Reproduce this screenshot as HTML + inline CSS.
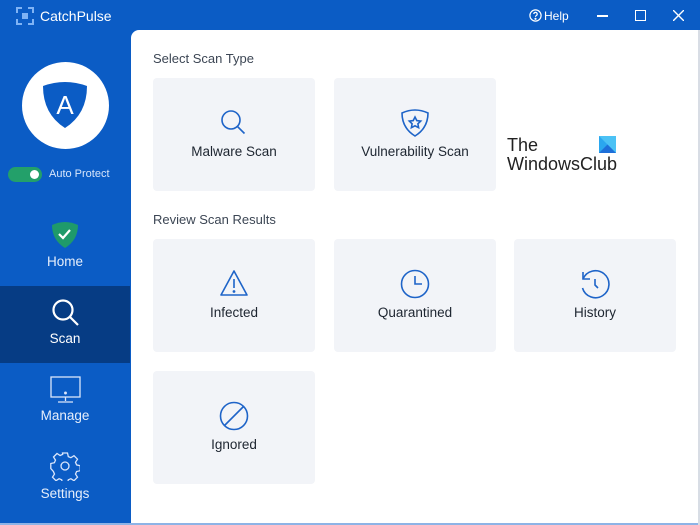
<!DOCTYPE html>
<html><head><style>
*{margin:0;padding:0;box-sizing:border-box}
body{width:700px;height:525px;overflow:hidden;background:#0b5cc5;font-family:"Liberation Sans",sans-serif;position:relative}
.abs{position:absolute}
.panel{left:131px;top:30px;width:567px;height:493px;background:#fff;border-top-left-radius:8px}
.card{position:absolute;width:162px;height:113px;background:#f2f4f8;border-radius:4px;text-align:center;font-size:13.5px;color:#1d2530}
.card svg{position:absolute;left:66px;top:30px}
.card span{position:absolute;left:0;right:0;top:66px}
.h{font-size:13px;color:#3c4654;position:absolute}
.nav{position:absolute;left:0;width:130px;text-align:center;color:#e6eefb;font-size:13.5px}
</style></head><body>
<div class="abs" style="left:0;top:523px;width:700px;height:2px;background:#8db3e6"></div>
<div class="abs" style="left:698px;top:30px;width:2px;height:495px;background:#d8dde5"></div>
<svg class="abs" style="left:16px;top:7px" width="18" height="18" viewBox="0 0 18 18" fill="none" stroke="#7fb3f5" stroke-width="2"><path d="M1 6V1h5M12 1h5v5M17 12v5h-5M6 17H1v-5"/><rect x="6" y="6" width="6" height="6" fill="#7fb3f5" stroke="none"/></svg>
<div class="abs" style="left:40px;top:8px;color:#fff;font-size:14px">CatchPulse</div>
<svg class="abs" style="left:529px;top:9px" width="13" height="13" viewBox="0 0 13 13" fill="none" stroke="#fff" stroke-width="1.2"><circle cx="6.5" cy="6.5" r="5.6"/><path d="M4.8 5a1.7 1.7 0 1 1 2.4 1.6c-.6.3-.7.7-.7 1.3"/><circle cx="6.5" cy="9.8" r=".5" fill="#fff"/></svg>
<div class="abs" style="left:544px;top:9px;color:#fff;font-size:12px">Help</div>
<div class="abs" style="left:597px;top:15px;width:11px;height:1.5px;background:#fff"></div>
<div class="abs" style="left:635px;top:10px;width:11px;height:11px;border:1.5px solid #fff"></div>
<svg class="abs" style="left:673px;top:10px" width="11" height="11" stroke="#fff" stroke-width="1.4"><path d="M0 0L11 11M11 0L0 11"/></svg>
<div class="abs" style="left:22px;top:62px;width:87px;height:87px;border-radius:50%;background:#fff"></div>
<svg class="abs" style="left:41px;top:82px" width="48" height="48" viewBox="0 0 48 48"><path d="M2 4Q24 -4 46 4Q46 32 24 46Q2 32 2 4Z" fill="#0b5cc5"/><text x="24" y="32" text-anchor="middle" fill="#fff" font-size="26" font-family="Liberation Sans">A</text></svg>
<div class="abs" style="left:8px;top:167px;width:34px;height:15px;border-radius:8px;background:#23a06a"></div>
<div class="abs" style="left:30px;top:170px;width:9px;height:9px;border-radius:50%;background:#fff"></div>
<div class="abs" style="left:49px;top:168px;color:#d8e6fb;font-size:11px">Auto Protect</div>
<svg class="abs" style="left:51px;top:221px" width="28" height="28" viewBox="0 0 28 28"><path d="M1 4Q14 -2 27 4Q27 19 14 27Q1 19 1 4Z" fill="#1f9a6a"/><path d="M8 13l4 4 7-8" stroke="#fff" stroke-width="2.2" fill="none"/></svg>
<div class="nav" style="top:254px">Home</div>
<div class="abs" style="left:0;top:286px;width:130px;height:77px;background:#063c84"></div>
<svg class="abs" style="left:51px;top:298px" width="30" height="30" fill="none" stroke="#fff" stroke-width="2.2"><circle cx="12" cy="12" r="9.5"/><path d="M19 19l8 8"/></svg>
<div class="nav" style="top:331px;color:#fff">Scan</div>
<svg class="abs" style="left:50px;top:376px" width="31" height="27" fill="none" stroke="#dbe6fb" stroke-width="1.3"><rect x="1" y="1" width="29" height="20"/><path d="M15.5 21v4M8 26h15"/><circle cx="15.5" cy="17" r=".8" fill="#dbe6fb"/></svg>
<div class="nav" style="top:408px">Manage</div>
<svg class="abs" style="left:50px;top:451px" width="30" height="30" viewBox="0 0 30 30" fill="none" stroke="#dbe6fb" stroke-width="1.3"><path d="M12.5 2h5l.8 3.6 2.6 1.1 3.1-2 3.5 3.5-2 3.1 1.1 2.6 3.6.8v5l-3.6.8-1.1 2.6 2 3.1-3.5 3.5-3.1-2-2.6 1.1-.8 3.6h-5l-.8-3.6-2.6-1.1-3.1 2-3.5-3.5 2-3.1-1.1-2.6L.8 17.5v-5l3.6-.8 1.1-2.6-2-3.1 3.5-3.5 3.1 2 2.6-1.1z"/><circle cx="15" cy="15" r="4"/></svg>
<div class="nav" style="top:486px">Settings</div>
<div class="abs panel"></div>
<div class="h" style="left:153px;top:51px">Select Scan Type</div>
<div class="h" style="left:153px;top:212px">Review Scan Results</div>
<div class="card" style="left:153px;top:78px"><svg width="30" height="30" fill="none" stroke="#1e64c8" stroke-width="1.6"><circle cx="12" cy="12" r="9"/><path d="M18.5 18.5l7 7"/></svg><span>Malware Scan</span></div>
<div class="card" style="left:334px;top:78px"><svg width="30" height="30" viewBox="0 0 30 30" fill="none" stroke="#1e64c8" stroke-width="1.6"><path d="M2 5Q15 -1 28 5Q28 20 15 28Q2 20 2 5Z"/><path d="M15 9l1.8 3.6 3.9.5-2.8 2.7.7 3.9-3.6-1.9-3.6 1.9.7-3.9-2.8-2.7 3.9-.5z"/></svg><span>Vulnerability Scan</span></div>
<div class="abs" style="left:507px;top:136px;font-size:18px;color:#222;line-height:19px">The<br>WindowsClub</div>
<svg class="abs" style="left:599px;top:136px" width="17" height="17"><rect width="17" height="17" fill="#2aa7ef"/><path d="M0 0L17 17V0z" fill="#4cc2f5"/><path d="M0 17L8.5 8.5 17 17z" fill="#1e6fd9"/></svg>
<div class="card" style="left:153px;top:239px"><svg width="30" height="30" fill="none" stroke="#1e64c8" stroke-width="1.6"><path d="M15 2L28 26H2z" stroke-linejoin="round"/><path d="M15 10v9"/><circle cx="15" cy="22.5" r=".6" fill="#1e64c8"/></svg><span>Infected</span></div>
<div class="card" style="left:334px;top:239px"><svg width="30" height="30" fill="none" stroke="#1e64c8" stroke-width="1.6"><circle cx="15" cy="15" r="13.5"/><path d="M15 7v8h7"/></svg><span>Quarantined</span></div>
<div class="card" style="left:514px;top:239px"><svg width="30" height="30" fill="none" stroke="#1e64c8" stroke-width="1.6"><path d="M3 10A13.5 13.5 0 1 1 2.5 19"/><path d="M3 3v7h7"/><path d="M15 10v6l3 3"/></svg><span>History</span></div>
<div class="card" style="left:153px;top:371px"><svg width="30" height="30" fill="none" stroke="#1e64c8" stroke-width="1.6"><circle cx="15" cy="15" r="13.5"/><path d="M5.5 24.5L24.5 5.5"/></svg><span>Ignored</span></div>
</body></html>
